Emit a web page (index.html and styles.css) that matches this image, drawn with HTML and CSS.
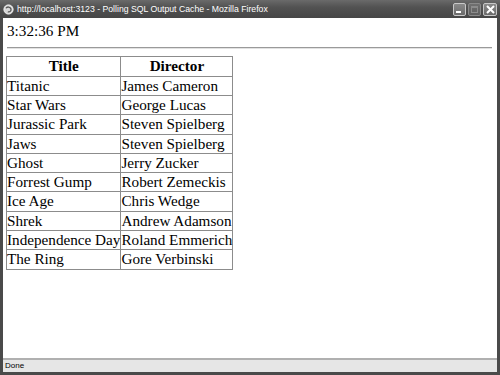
FILE: index.html
```html
<!DOCTYPE html>
<html>
<head>
<meta charset="utf-8">
<title>Polling SQL Output Cache</title>
<link rel="stylesheet" href="styles.css">
</head>
<body>
<div class="window">
  <div class="titlebar">
    <svg class="favicon" width="11" height="11" viewBox="0 0 11 11">
      <circle cx="5.5" cy="5.5" r="4.6" fill="#d8d8d8" stroke="#f4f4f4" stroke-width="1"/>
      <path d="M3 4.2 C4 2.4 7.4 2.6 8 5 C8.4 7 6.6 8.4 4.8 7.8" fill="none" stroke="#555" stroke-width="1.3"/>
    </svg>
    <span class="title-text">http://localhost:3123 - Polling SQL Output Cache - Mozilla Firefox</span>
    <div class="buttons">
      <span class="btn"><span class="min-glyph"></span></span>
      <span class="btn disabled"><span class="max-glyph"></span></span>
      <span class="btn close">
        <svg width="9" height="9" viewBox="0 0 9 9"><path d="M1 1 L8 8 M8 1 L1 8" stroke="#fff" stroke-width="2"/></svg>
      </span>
    </div>
  </div>
  <div class="content">
    <div class="time">3:32:36 PM</div>
    <hr class="rule">
    <table class="movies">
      <tr><th>Title</th><th>Director</th></tr>
      <tr><td>Titanic</td><td>James Cameron</td></tr>
      <tr><td>Star Wars</td><td>George Lucas</td></tr>
      <tr><td>Jurassic Park</td><td>Steven Spielberg</td></tr>
      <tr><td>Jaws</td><td>Steven Spielberg</td></tr>
      <tr><td>Ghost</td><td>Jerry Zucker</td></tr>
      <tr><td>Forrest Gump</td><td>Robert Zemeckis</td></tr>
      <tr><td>Ice Age</td><td>Chris Wedge</td></tr>
      <tr><td>Shrek</td><td>Andrew Adamson</td></tr>
      <tr><td>Independence Day</td><td>Roland Emmerich</td></tr>
      <tr><td>The Ring</td><td>Gore Verbinski</td></tr>
    </table>
  </div>
  <div class="statusbar">Done</div>
</div>
</body>
</html>
```
FILE: styles.css
```css
html, body {
  margin: 0;
  padding: 0;
}
body {
  width: 500px;
  height: 375px;
  overflow: hidden;
  background: #4a4a4a;
}
.window {
  box-sizing: border-box;
  width: 500px;
  height: 375px;
  display: flex;
  flex-direction: column;
  background: #4a4a4a;
  padding: 0 3px 3px 3px;
}
.titlebar {
  height: 18px;
  flex: none;
  display: flex;
  align-items: center;
  margin: 0 -3px;
  padding: 0 3px 0 3px;
  background: linear-gradient(#6a6a6a, #525252 40%, #464646);
  color: #fff;
  font-family: "Liberation Sans", Arial, sans-serif;
  font-size: 8.7px;
}
.favicon {
  flex: none;
  margin-right: 3px;
}
.title-text {
  flex: 1;
  white-space: nowrap;
}
.buttons {
  display: flex;
  gap: 2px;
}
.btn {
  box-sizing: border-box;
  width: 13px;
  height: 13px;
  border: 1px solid #c8c8c8;
  border-radius: 2px;
  background: linear-gradient(#8a8a8a, #6a6a6a);
  display: flex;
  align-items: center;
  justify-content: center;
}
.btn.disabled {
  border-color: #8a8a8a;
  background: linear-gradient(#707070, #5e5e5e);
}
.btn.close {
  width: 14px;
}
.min-glyph {
  width: 5px;
  height: 2px;
  background: #fff;
  margin-top: 6px;
  margin-right: 2px;
}
.max-glyph {
  box-sizing: border-box;
  width: 7px;
  height: 7px;
  border: 1px solid #8c8c8c;
  border-top-width: 2px;
}
.content {
  flex: 1;
  background: #fff;
  padding: 4px 4px 4px 3px;
  font-family: "Liberation Serif", "Times New Roman", serif;
  font-size: 15.2px;
  color: #000;
  overflow: hidden;
}
.time {
  line-height: 18.4px;
  padding-left: 1px;
}
.rule {
  margin: 7px 1px 7px 1px;
  border: 0;
  border-top: 1px solid #9a9a9a;
  border-bottom: 1px solid #e2e2e2;
  height: 0;
}
.movies {
  border-collapse: collapse;
  border: 1px solid #808080;
}
.movies th, .movies td {
  border: 1px solid #8c8c8c;
  padding: 0;
  line-height: 18.3px;
  white-space: nowrap;
}
.movies th {
  font-weight: bold;
  text-align: center;
}
.movies td {
  text-align: left;
}
.statusbar {
  flex: none;
  height: 12px;
  border-top: 2px solid #b0b0b0;
  background: #e6e6e6;
  font-family: "Liberation Sans", Arial, sans-serif;
  font-size: 8px;
  line-height: 12px;
  padding-left: 2px;
  color: #000;
}
```
